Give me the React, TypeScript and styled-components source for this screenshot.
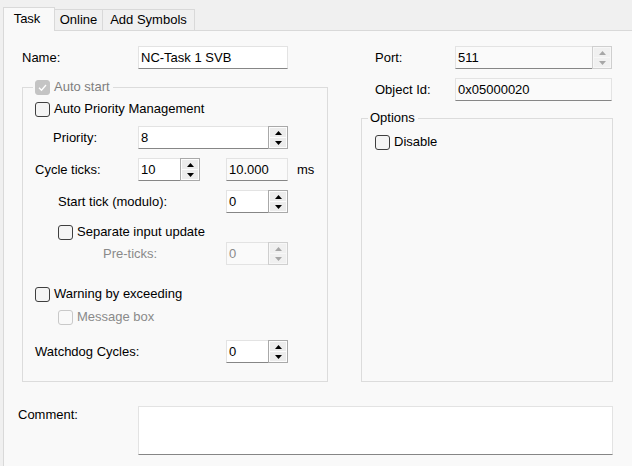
import React from 'react';
import styled, { createGlobalStyle } from 'styled-components';

const GlobalStyle = createGlobalStyle`
  html, body {
    margin: 0;
    padding: 0;
    background: #f0f0f0;
    overflow: hidden;
  }
  body {
    font-family: 'Liberation Sans', Arial, sans-serif;
    font-size: 13px;
    line-height: 16px;
    color: #000;
  }
`;

const Window = styled.div`
  width: 632px;
  height: 466px;
  display: flex;
  flex-direction: column;
`;

const TabBar = styled.div`
  display: flex;
  align-items: flex-end;
  height: 30px;
  padding-left: 3px;
  flex: none;
  position: relative;
  z-index: 1;
`;

const Tab = styled.div<{ $active?: boolean; $w: number }>`
  box-sizing: border-box;
  width: ${(p) => p.$w}px;
  height: ${(p) => (p.$active ? 24 : 21)}px;
  margin-bottom: ${(p) => (p.$active ? -1 : 0)}px;
  padding-top: ${(p) => (p.$active ? 3 : 2)}px;
  padding-right: ${(p) => (p.$active ? 4 : 0)}px;
  border: 1px solid #d9d9d9;
  border-bottom: none;
  border-left-width: ${(p) => (p.$active ? 1 : 0)}px;
  background: ${(p) => (p.$active ? '#f9f9f9' : '#f0f0f0')};
  display: flex;
  justify-content: center;
  align-items: flex-start;
  white-space: nowrap;
`;

const Page = styled.div`
  flex: 1;
  margin-left: 3px;
  background: #f9f9f9;
  border-left: 1px solid #d9d9d9;
  border-top: 1px solid #d9d9d9;
  padding: 15px 0 0 18px;
`;

const Columns = styled.div`
  display: flex;
  gap: 33px;
  align-items: flex-start;
`;

const Column = styled.div<{ $w: number }>`
  width: ${(p) => p.$w}px;
  display: flex;
  flex-direction: column;
`;

const Row = styled.div<{ $mt?: number; $indent?: number }>`
  display: flex;
  align-items: center;
  flex: none;
  height: 23px;
  margin-top: ${(p) => p.$mt ?? 0}px;
  padding-left: ${(p) => p.$indent ?? 0}px;
`;

const CheckRow = styled(Row)`
  height: 16px;
  gap: 4px;
`;

const Label = styled.span<{ $w?: number; $muted?: boolean }>`
  flex: none;
  width: ${(p) => (p.$w ? `${p.$w}px` : 'auto')};
  color: ${(p) => (p.$muted ? '#8a8a8a' : '#000')};
  white-space: nowrap;
`;

const Unit = styled.span`
  margin-left: 9px;
`;

const Group = styled.fieldset<{ $h: number; $mt: number; $pl: number }>`
  box-sizing: border-box;
  margin: ${(p) => p.$mt}px 0 0 0;
  min-width: 0;
  height: ${(p) => p.$h}px;
  border: 1px solid #dcdcdc;
  padding: 0 0 0 ${(p) => p.$pl}px;
  display: flex;
  flex-direction: column;
`;

const Legend = styled.legend<{ $x: number; $muted?: boolean }>`
  margin-left: ${(p) => p.$x}px;
  padding: 0 3px 0 2px;
  height: 16px;
  line-height: 16px;
  display: flex;
  align-items: center;
  gap: 4px;
  color: ${(p) => (p.$muted ? '#7e7e7e' : '#000')};
`;

const Field = styled.div<{ $w: number; $h?: number; $kind?: 'edit' | 'readonly' | 'disabled' }>`
  box-sizing: border-box;
  width: ${(p) => p.$w}px;
  height: ${(p) => p.$h ?? 23}px;
  flex: none;
  display: flex;
  align-items: ${(p) => (p.$h ? 'flex-start' : 'center')};
  background: ${(p) => (p.$kind === 'edit' || !p.$kind ? '#ffffff' : '#fafafa')};
  border: 1px solid #e3e3e3;
  border-bottom-color: ${(p) => (p.$kind === 'disabled' ? '#e3e3e3' : '#868686')};
  color: ${(p) => (p.$kind === 'disabled' ? '#8a8a8a' : '#000')};
`;

const Value = styled.span`
  flex: 1;
  padding-left: 2px;
  white-space: nowrap;
  overflow: hidden;
`;

const Spinner = styled.div<{ $disabled?: boolean }>`
  box-sizing: border-box;
  width: 20px;
  align-self: stretch;
  margin: -1px -1px -1px 0;
  border: 1px solid ${(p) => (p.$disabled ? '#cfcfcf' : '#a9a9a9')};
  padding: 1px;
  display: flex;
  flex-direction: column;
  gap: 1px;
  background: ${(p) => (p.$disabled ? '#f7f7f7' : '#fdfdfd')};
`;

const SpinButton = styled.div<{ $disabled?: boolean }>`
  flex: 1;
  display: flex;
  align-items: center;
  justify-content: center;
  background: ${(p) => (p.$disabled ? '#f0f0f0' : '#ececec')};
  color: ${(p) => (p.$disabled ? '#a6a6a6' : '#000')};
`;

const Box = styled.span<{ $checked?: boolean; $disabled?: boolean }>`
  box-sizing: border-box;
  width: 15px;
  height: 15px;
  flex: none;
  border-radius: 3px;
  border: 1px solid
    ${(p) => (p.$checked ? '#c4c4c4' : p.$disabled ? '#c9c9c9' : '#3f3f3f')};
  background: ${(p) => (p.$checked ? '#c4c4c4' : p.$disabled ? '#f9f9f9' : '#f4f4f4')};
  display: flex;
  align-items: center;
  justify-content: center;
`;

const CommentRow = styled.div`
  display: flex;
  align-items: flex-start;
  margin: 24px 0 0 -4px;
`;

const CommentLabel = styled(Label)`
  margin-top: 1px;
`;

const Arrow = ({ down }: { down?: boolean }) => (
  <svg width="7" height="4" viewBox="0 0 7 4">
    <polygon points={down ? '0,0 7,0 3.5,4' : '3.5,0 7,4 0,4'} fill="currentColor" />
  </svg>
);

const Spin = ({
  value,
  w,
  disabled,
  readOnly,
}: {
  value: string;
  w: number;
  disabled?: boolean;
  readOnly?: boolean;
}) => (
  <Field $w={w} $kind={disabled ? 'disabled' : readOnly ? 'readonly' : 'edit'}>
    <Value>{value}</Value>
    <Spinner $disabled={disabled || readOnly}>
      <SpinButton $disabled={disabled || readOnly}>
        <Arrow />
      </SpinButton>
      <SpinButton $disabled={disabled || readOnly}>
        <Arrow down />
      </SpinButton>
    </Spinner>
  </Field>
);

const Check = ({ checked, disabled }: { checked?: boolean; disabled?: boolean }) => (
  <Box $checked={checked} $disabled={disabled}>
    {checked && (
      <svg width="11" height="11" viewBox="0 0 11 11">
        <polyline points="2,5.8 4.5,8.2 9,3" fill="none" stroke="#fff" strokeWidth="1.3" />
      </svg>
    )}
  </Box>
);

export default function App() {
  return (
    <Window>
      <GlobalStyle />
      <TabBar>
        <Tab $active $w={52}>Task</Tab>
        <Tab $w={48}>Online</Tab>
        <Tab $w={92}>Add Symbols</Tab>
      </TabBar>
      <Page>
        <Columns>
          <Column $w={306}>
            <Row>
              <Label $w={116}>Name:</Label>
              <Field $w={150}>
                <Value>NC-Task 1 SVB</Value>
              </Field>
            </Row>
            <Group $h={303} $mt={10} $pl={12}>
              <Legend $x={-2} $muted>
                <Check checked disabled />
                Auto start
              </Legend>
              <CheckRow $mt={6}>
                <Check />
                <Label>Auto Priority Management</Label>
              </CheckRow>
              <Row $mt={9} $indent={18}>
                <Label $w={85}>Priority:</Label>
                <Spin value="8" w={150} />
              </Row>
              <Row $mt={9}>
                <Label $w={103}>Cycle ticks:</Label>
                <Spin value="10" w={62} />
                <Field $w={62} $kind="readonly" style={{ marginLeft: 26 }}>
                  <Value>10.000</Value>
                </Field>
                <Unit>ms</Unit>
              </Row>
              <Row $mt={9} $indent={23}>
                <Label $w={168}>Start tick (modulo):</Label>
                <Spin value="0" w={62} />
              </Row>
              <CheckRow $mt={11} $indent={23}>
                <Check />
                <Label>Separate input update</Label>
              </CheckRow>
              <Row $mt={2} $indent={68}>
                <Label $w={123} $muted>
                  Pre-ticks:
                </Label>
                <Spin value="0" w={62} disabled />
              </Row>
              <CheckRow $mt={21}>
                <Check />
                <Label>Warning by exceeding</Label>
              </CheckRow>
              <CheckRow $mt={7} $indent={23}>
                <Check disabled />
                <Label $muted>Message box</Label>
              </CheckRow>
              <Row $mt={15}>
                <Label $w={191}>Watchdog Cycles:</Label>
                <Spin value="0" w={62} />
              </Row>
            </Group>
          </Column>
          <Column $w={252}>
            <Row $indent={14}>
              <Label $w={80}>Port:</Label>
              <Spin value="511" w={157} readOnly />
            </Row>
            <Row $mt={9} $indent={14}>
              <Label $w={80}>Object Id:</Label>
              <Field $w={157} $kind="readonly">
                <Value>0x05000020</Value>
              </Field>
            </Row>
            <Group $h={272} $mt={9} $pl={13}>
              <Legend $x={-7}>Options</Legend>
              <CheckRow $mt={8}>
                <Check />
                <Label>Disable</Label>
              </CheckRow>
            </Group>
          </Column>
        </Columns>
        <CommentRow>
          <CommentLabel $w={120}>Comment:</CommentLabel>
          <Field $w={475} $h={49} />
        </CommentRow>
      </Page>
    </Window>
  );
}
